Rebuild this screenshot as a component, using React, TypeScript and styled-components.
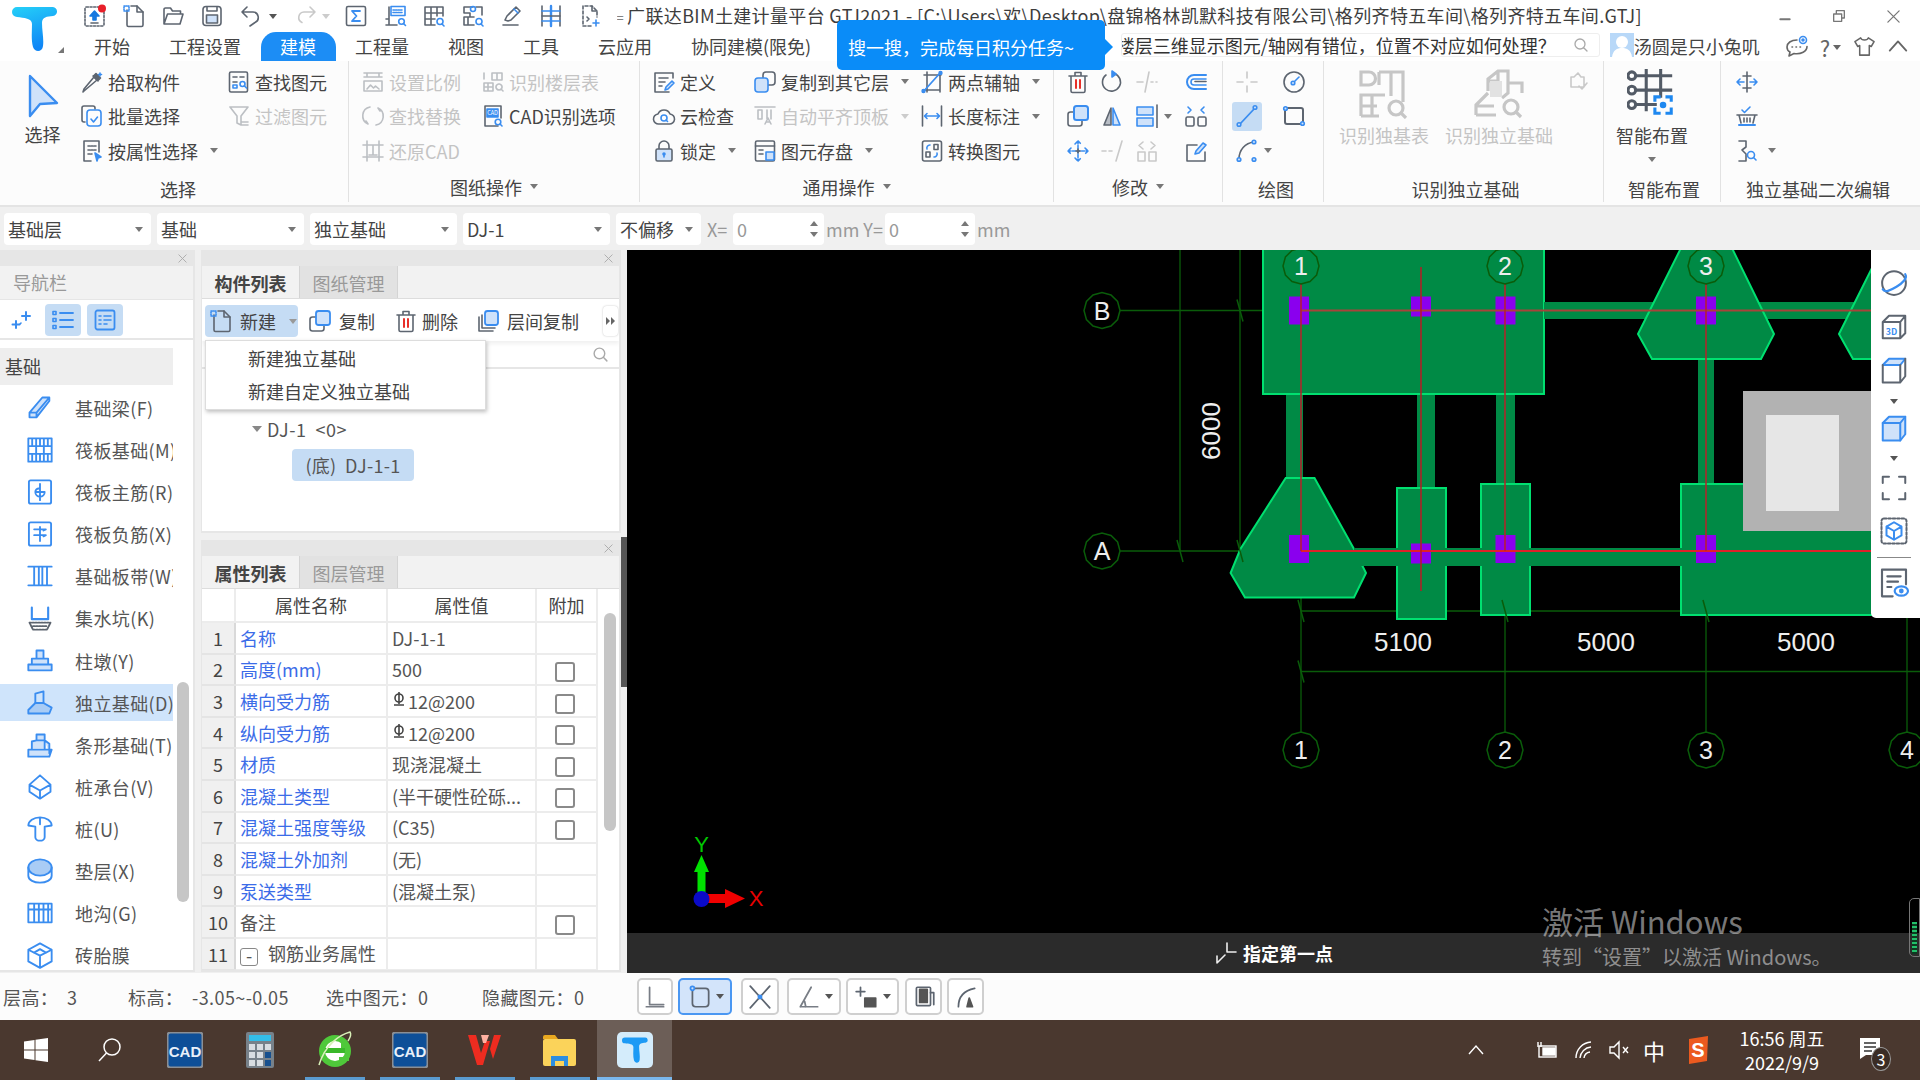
import React from 'react';
import styled, { createGlobalStyle } from 'styled-components';

const G = '#5d6570';
const B = '#3a8df0';
const L = '#cfe2fa';

const GlobalStyle = createGlobalStyle`
  html, body { margin: 0; padding: 0; background: #f0f0f0; }
  body { font-family: "Noto Sans CJK SC", "Noto Sans", sans-serif; font-size: 18px; color: #444; }
  * { box-sizing: border-box; }
`;

const Page = styled.div`
  width: 1920px;
  height: 1080px;
  display: flex;
  flex-direction: column;
  overflow: hidden;
`;

const Svg = styled.svg`
  fill: none;
  stroke: ${G};
  stroke-width: 1.6;
  stroke-linecap: round;
  stroke-linejoin: round;
  flex-shrink: 0;
  display: block;
`;

const icons: Record<string, React.ReactNode> = {
  upload: (<>
    <rect x="2" y="3" width="19" height="19" rx="1.5" strokeDasharray="2 1.6" />
    <path d="M11.5 7l4.5 5h-3v4h-3v-4H7z" fill="#1878e0" stroke="#1878e0" />
    <path d="M8 19h7" stroke={G} />
    <circle cx="19" cy="4.5" r="4" fill="#e8202a" stroke="none" />
  </>),
  newfile: (<>
    <path d="M5 6v15a1.5 1.5 0 0 0 1.5 1.5h13A1.5 1.5 0 0 0 21 21V8l-6-6H9" />
    <path d="M15 2v6h6" />
    <path d="M2 2h5v5H2z" stroke={B} strokeDasharray="1 1" />
  </>),
  folder: (<path d="M3 20V5.5A1.5 1.5 0 0 1 4.5 4h5l2 3h8v3M3 20l3.5-10H22l-3 10z" />),
  save: (<>
    <rect x="3" y="2.5" width="18" height="19" rx="3" />
    <path d="M7 3v4h10V3" />
    <rect x="6.5" y="11" width="11" height="8" fill={L} stroke={G} />
  </>),
  undo: (<path d="M8 3L3 8l5 5M3 8h11a5.5 5.5 0 0 1 2 10.5L11 22" />),
  redo: (<path d="M16 3l5 5-5 5M21 8H10a5.5 5.5 0 0 0-2 10.5" stroke="#c9c9c9" />),
  sigma: (<>
    <rect x="2.5" y="2.5" width="19" height="19" rx="1.5" />
    <path d="M16 7H8l4.5 5L8 17h8" stroke={B} strokeWidth="1.8" />
  </>),
  sheetFind: (<>
    <path d="M6 3v18h8M3 21h4M6 15H3" />
    <rect x="8" y="2.5" width="14" height="9" stroke={B} />
    <path d="M10 6h10M10 8.5h10" stroke={B} strokeDasharray="1.5 1" />
    <circle cx="18.5" cy="17.5" r="2.8" stroke={B} />
    <path d="M20.5 19.5l2 2" stroke={B} />
  </>),
  gridFind: (<>
    <path d="M13 21H3V3h18v9M3 9h18M3 15h10M9 3v18M15 3v9" />
    <circle cx="18" cy="17.5" r="3" stroke={B} />
    <path d="M20 20l2 2" stroke={B} />
  </>),
  gridFind2: (<>
    <path d="M12 3H3v6h6v4H3v8h10M15 3h6v8M9 13h4M7 13v8" />
    <circle cx="12" cy="5" r="2.5" stroke={B} />
    <circle cx="18" cy="17.5" r="3" stroke={B} />
    <path d="M20 20l2 2" stroke={B} />
  </>),
  pen: (<>
    <path d="M3 21h15" />
    <path d="M8 17l-3-1 2-4 9-9 4 4-9 9z" />
    <path d="M14 5l4 4" stroke={B} />
  </>),
  sections: (<>
    <path d="M3 2v20M21 2v20" />
    <path d="M12 2v20" stroke={B} strokeWidth="2.4" />
    <path d="M3 7h18M3 17h18" stroke={B} />
    <path d="M3 12h18" />
  </>),
  pagePlus: (<>
    <path d="M13 22H5V2h9l5 5v6" strokeDasharray="3 2" />
    <path d="M14 2v5h5" />
    <path d="M9 13l2 2-2 2" />
    <path d="M18 16v6M15 19h6" stroke={B} />
  </>),
  pick: (<>
    <path d="M4 21l-1 1 1-3 10-12 3 3z" />
    <path d="M13 6l5 5M16 3.5l4.5 4.5-2.5 2.5L13.5 6z" fill={G} />
    <path d="M20 3v3M18.5 4.5h3" stroke={B} />
  </>),
  batch: (<>
    <path d="M5 18H4a2 2 0 0 1-2-2V4a2 2 0 0 1 2-2h9a2 2 0 0 1 2 2v1" />
    <rect x="7" y="6" width="14" height="16" rx="3" stroke={B} />
    <path d="M11 15l2.5 3 4-5" stroke={B} />
  </>),
  attrSel: (<>
    <path d="M11 22H4V2h15v11" />
    <path d="M8 7h8M8 11h8M8 15h4" strokeDasharray="2 1" />
    <path d="M15 14l6 4-3 1-1 3z" fill={B} stroke={B} />
  </>),
  findEl: (<>
    <rect x="2.5" y="2" width="18" height="20" rx="1.5" />
    <path d="M6 7h4M13 7h4M6 12h4" />
    <rect x="6" y="15" width="4" height="3" stroke={B} />
    <circle cx="15.5" cy="14" r="2.5" stroke={B} />
    <path d="M17.5 16l2 2" stroke={B} />
  </>),
  filter: (<path d="M3 3h18l-7 9v9l-4-2v-7zM15 18h6M15 21h6" />),
  scale: (<path d="M3 3h18M3 7h18M6 3v4M18 3v4M3 11h18v10H3zM6 19l3.5-4 3 3 2-2 3.5 3" />),
  floorTable: (<path d="M3 3v6M3 13h9v8H3zM7 13v8M11 3h10v7H11zM16 3v7M3 17h9M18 14a3 3 0 1 0 .01 0M20 19l2 2" />),
  replace: (<path d="M9 3a9 9 0 0 0-2 17M7 20l-2-3M15 21a9 9 0 0 0 2-17M17 4l2 3" />),
  cadOpt: (<>
    <path d="M17 22H4V2h16v12" />
    <rect x="6" y="5" width="11" height="8" fill={B} stroke={B} />
    <text x="11.5" y="11.2" fontSize="5.5" fill="#fff" stroke="none" textAnchor="middle">CAD</text>
    <circle cx="17" cy="18" r="2.8" stroke={B} />
    <path d="M19 20l2 2" stroke={B} />
  </>),
  restore: (<path d="M2 6h20M2 18h20M6 2v20M18 2v20M8 16h8M12 6v10" />),
  define: (<>
    <path d="M21 8V3H3v19h14" />
    <path d="M7 8h9M7 12h6M7 16h3" />
    <path d="M13 20l1-3 6-6 2 2-6 6z" stroke={B} fill={L} />
  </>),
  cloud: (<>
    <path d="M7 20a5 5 0 0 1-1-10 6.5 6.5 0 0 1 12 0 5 5 0 0 1-1 10z" />
    <circle cx="12" cy="14" r="3" stroke={B} />
    <path d="M14 16l1.5 1.5" stroke={B} />
  </>),
  lock: (<>
    <path d="M7 10V7a5 5 0 0 1 10 0v3" />
    <rect x="4" y="10" width="16" height="12" rx="1.5" fill={L} />
    <circle cx="12" cy="15" r="1" fill={B} stroke={B} />
    <path d="M12 15v3" stroke={B} />
  </>),
  copyTo: (<>
    <rect x="10" y="2" width="12" height="13" rx="3" />
    <rect x="2" y="8" width="13" height="14" rx="3" fill={L} stroke={B} />
  </>),
  layerCopy: (<>
    <path d="M3 8v14h14" />
    <path d="M6 6v13h13" />
    <rect x="9" y="2" width="13" height="14" rx="2.5" fill={L} stroke={B} strokeWidth="1.8" />
  </>),
  compCopy: (<>
    <rect x="2" y="8" width="14" height="14" rx="2.5" />
    <rect x="8" y="2" width="14" height="14" rx="2.5" fill={L} stroke={B} strokeWidth="1.8" />
  </>),
  autoAlign: (<path d="M2 3h20M5 6h4v9H5zM14 6v9M18 6v9M12 20l3-6 3 6M13 18h4" />),
  storeEl: (<>
    <rect x="2.5" y="2" width="19" height="20" rx="1.5" />
    <path d="M2.5 7h19M6 11h4M6 15h4" />
    <rect x="13" y="13" width="8" height="8" fill={L} stroke={B} />
  </>),
  twoPoint: (<>
    <path d="M4 5h17M3 20h17M7 2v20M20 3v19" />
    <path d="M3 22L21 2" stroke={B} strokeWidth="1.8" />
    <circle cx="3.5" cy="21" r="1.4" fill={B} stroke={B} />
    <circle cx="20.5" cy="3" r="1.4" fill={B} stroke={B} />
  </>),
  dim: (<>
    <path d="M2.5 2v20M21.5 2v20" />
    <path d="M5 12h14M7 9.5L4.5 12 7 14.5M17 9.5l2.5 2.5-2.5 2.5" stroke={B} />
  </>),
  convert: (<>
    <rect x="2.5" y="2" width="19" height="20" rx="2" />
    <rect x="6" y="13" width="4" height="5" />
    <rect x="14" y="5.5" width="4" height="5" />
    <path d="M7 10a3 3 0 0 1 3-4M17 14a3 3 0 0 1-3 4" stroke={B} />
  </>),
  trash: (<>
    <path d="M3 6h18M9 5V2.5h6V5M5 6v15a1.5 1.5 0 0 0 1.5 1.5h11A1.5 1.5 0 0 0 19 21V6" />
    <path d="M10 10v8M14 10v8" stroke="#e8302a" strokeWidth="2" />
  </>),
  rotate: (<>
    <path d="M14 3.5A9 9 0 1 1 6 5" />
    <path d="M12 1l4 3-4 3z" fill={B} stroke={B} />
  </>),
  breakLine: (<path d="M2 12h6M14 2l-4 20M16 12h2M21 12h1" stroke="#c9c9c9" />),
  offset: (<>
    <path d="M22 5H10a7 7 0 0 0 0 14h12" stroke={B} strokeWidth="2" />
    <path d="M22 9H10a3 3 0 0 0 0 6h12" stroke={B} />
    <path d="M22 11.5H11" stroke={G} />
  </>),
  copyEl: (<>
    <rect x="2" y="8" width="14" height="14" rx="2.5" />
    <rect x="8" y="2" width="14" height="14" rx="2.5" fill={L} stroke={B} strokeWidth="2" />
  </>),
  mirror: (<>
    <path d="M11 4L4 21h7z" fill="#b9bec6" />
    <path d="M13 4l7 17h-7z" fill={L} stroke={B} />
  </>),
  align: (<>
    <rect x="2" y="3" width="16" height="8" stroke={B} fill={L} />
    <rect x="2" y="14" width="16" height="8" stroke={B} fill={L} />
    <path d="M22 1v23" />
  </>),
  splitBoxes: (<>
    <rect x="2" y="13" width="8" height="9" rx="1.5" />
    <rect x="14" y="13" width="8" height="9" rx="1.5" />
    <path d="M4 3l3 3-3 3M20 3l-3 3 3 3" stroke={B} />
  </>),
  move: (<>
    <path d="M12 2v20M2 12h20M9 5l3-3 3 3M9 19l3 3 3-3M5 9l-3 3 3 3M19 9l3 3-3 3" stroke={B} strokeDasharray="3 1.5" />
    <path d="M10 12h4M12 10v4" />
  </>),
  stretch: (<path d="M2 12h4M9 12h3M22 2l-6 20" stroke="#c9c9c9" />),
  splitOff: (<path d="M3 13h7v9H3zM14 13h7v9h-7zM8 3L4 6.5 8 10M16 3l4 3.5-4 3.5" stroke="#c9c9c9" />),
  editBox: (<>
    <path d="M13 6H3v16h18V13" />
    <path d="M11 15l1-3 7-8 3 2-7 8z" fill={L} stroke={B} />
  </>),
  point: (<path d="M12 2v6M12 16v6M2 12h6M16 12h6" stroke="#c9c9c9" />),
  dial: (<>
    <circle cx="12" cy="12" r="10" />
    <circle cx="11" cy="13" r="1.8" stroke={B} fill={L} />
    <path d="M12.5 11.5L17 7" stroke={B} />
  </>),
  line: (<>
    <path d="M5 20L20 4" stroke={B} strokeWidth="1.8" />
    <circle cx="4" cy="20.5" r="1.8" fill={L} stroke={B} />
    <circle cx="20" cy="3.5" r="1.8" fill={L} stroke={B} />
  </>),
  rect: (<>
    <rect x="3" y="4" width="18" height="16" rx="2" strokeWidth="2" />
    <circle cx="3.5" cy="4.5" r="1.8" fill={L} stroke={B} />
    <circle cx="20.5" cy="19.5" r="1.8" fill={L} stroke={B} />
  </>),
  arc: (<>
    <path d="M4 20c0-9 6-16 15-17" />
    <circle cx="4" cy="20.5" r="1.8" fill={L} stroke={B} />
    <circle cx="19" cy="3" r="1.8" fill={L} stroke={B} />
    <circle cx="19" cy="20.5" r="1.8" fill={L} stroke={B} />
  </>),
  check: (<path d="M5 20h13V10h-3L12 6 8 10H5zM13 19l3 3 5-6" stroke="#c9c9c9" />),
  rotate3: (<>
    <path d="M12 2v20M8 6h8M8 18h8" />
    <path d="M2 12h7M15 12h7M5 9l-3 3 3 3M19 9l3 3-3 3" stroke={B} />
  </>),
  basket: (<>
    <path d="M7 6l2.5 2.5L15 3" stroke={B} />
    <path d="M2 11h20M4 11l2 8M20 11l-2 8M9 14v4M12 14v4M15 14v4" />
    <path d="M4 21h16" stroke={B} strokeWidth="2" />
  </>),
  fold: (<>
    <path d="M4 2h7v6l-4 3 4 4v7H4" />
    <circle cx="16" cy="16" r="3.5" stroke={B} />
    <path d="M18.5 18.5l2.5 2.5" stroke={B} />
  </>),
  sparkle: (<>
    <path d="M17 4v8M13 8h8M7 13v7M3.5 16.5h7" stroke={B} strokeWidth="2" />
    <path d="M12 15l-1 1" stroke={B} />
  </>),
  listView: (<>
    <path d="M9 5h13M9 12h13M9 19h13" stroke={B} strokeWidth="1.8" />
    <rect x="2" y="3.5" width="3" height="3" stroke={B} />
    <rect x="2" y="10.5" width="3" height="3" stroke={B} />
    <rect x="2" y="17.5" width="3" height="3" stroke={B} />
  </>),
  detailView: (<>
    <rect x="2.5" y="2.5" width="19" height="19" rx="2" stroke={B} strokeWidth="1.8" />
    <path d="M6 8h2M11 8h7M6 12h2M11 12h7M6 16h2M11 16h3" stroke={B} />
  </>),
  beam: (<path d="M3 16L14 3h6v3L9 20H3zM3 16h6v4M9 16L20 3" stroke={B} fill={L} />),
  raft: (<path d="M2 2h20v20H2zM2 8.7h20M2 15.3h20M8.7 2v20M15.3 2v20M5.3 2v6.7M12 2v6.7M18.7 2v6.7M5.3 15.3V22M12 15.3V22M18.7 15.3V22" stroke={B} />),
  raftMain: (<>
    <rect x="2.5" y="2" width="19" height="20" rx="1.5" stroke={B} />
    <path d="M12 5v14M8 12a3 3 0 0 1 3-3M16 12a4 4 0 0 1-8 0h8" stroke={B} />
  </>),
  raftNeg: (<>
    <rect x="2.5" y="2" width="19" height="20" rx="1.5" stroke={B} />
    <path d="M7 8h10l-2 1M7 13h10l-2 1M12 6v12" stroke={B} />
  </>),
  strip: (<path d="M2 4h20M2 20h20M7 4v16M11 4v16M14 4v16M18 4v16" stroke={B} fill={L} />),
  sump: (<>
    <path d="M5 3v10h14V3" stroke={B} strokeWidth="1.8" />
    <path d="M3 16h18l-3 6H6zM6 19h12" stroke={G} strokeDasharray="1.5 1" />
  </>),
  pier: (<path d="M9 10V3h6v7M5 15v-5h14v5M2 15h20v5H2z" stroke={B} fill={L} />),
  footing: (<>
    <path d="M8 12V4l7-2v10" stroke={B} />
    <path d="M2 21v-3l6-6h7l7 4-2 5H2z" stroke={B} fill="#a9ccf5" />
  </>),
  stripF: (<path d="M9 8V3h7v5M5 15V9l4-1h7v7M2 16h20l-2 6H2zM16 8l4 3v8" stroke={B} fill={L} />),
  pileCap: (<path d="M12 2L3 10v6l9 6 9-6v-6zM3 10l9 5 9-5M12 15v7" stroke={B} />),
  pile: (<path d="M2 9a10 7 0 0 1 20 0l-6 1v9a4 3 0 0 1-8 0v-9zM12 2v6" stroke={B} />),
  pad: (<>
    <ellipse cx="12" cy="9" rx="10" ry="7" stroke={B} fill="#a9ccf5" />
    <path d="M2 9v7c0 4 5 6 10 6s10-2 10-6V9" stroke={B} />
  </>),
  trench: (<path d="M2 4h20v16H2zM2 9h20M7 4v16M11 4v16M15 4v16M19 4v16" stroke={B} />),
  brick: (<path d="M12 2l10 5.500v10L12 23 2 17.500v-10zM2 7.500l10 5 10-5M12 12.500V23M7 10l5-3 5 3" stroke={B} />),
  orbit: (<>
    <circle cx="12" cy="12" r="9.5" />
    <path d="M3 17c1.5 3 6 1 11-2s9-7 7-10" stroke={B} strokeWidth="1.8" />
  </>),
  cube3d: (<>
    <path d="M3 8l5-5h13v14l-4 4H3zM3 8h14v13M17 8l4-5" />
    <text x="10" y="18" fontSize="7" fontWeight="700" fill={B} stroke="none" textAnchor="middle">3D</text>
  </>),
  cubeTop: (<>
    <path d="M3 8l5-5h13l-4 5z" fill={L} stroke={B} />
    <path d="M3 8v14h14V8M17 22l4-5V3" />
  </>),
  cubeSel: (<>
    <path d="M3 8l5-5h13v14l-4 5H3z" fill={L} stroke={B} />
    <path d="M3 8h14v14M17 8l4-5" stroke={B} />
  </>),
  corners: (<path d="M3 8V3h5M16 3h5v5M3 16v5h5M16 21h5v-5" />),
  cubeBox: (<>
    <rect x="2" y="2" width="20" height="20" rx="2" strokeDasharray="2 1.5" />
    <path d="M12 5l6 3.5v7L12 19l-6-3.5v-7zM6 8.5l6 3.5 6-3.5M12 12v7" stroke={B} />
  </>),
  props: (<>
    <path d="M11 22H3V2h18v11" />
    <path d="M7 7h10M7 11h8M7 15h3" />
    <ellipse cx="17.5" cy="18" rx="5" ry="3.5" stroke={B} />
    <circle cx="17.5" cy="18" r="1" fill={B} stroke={B} />
  </>),
  stOrtho: (<path d="M7 3v16h13M4 21h16" stroke="#787d85" />),
  stBox: (<>
    <rect x="5" y="4" width="15" height="17" rx="3" />
    <circle cx="5" cy="4" r="1.8" stroke={B} fill={L} />
  </>),
  stCross: (<>
    <path d="M3 2l18 20M21 2L3 22" />
    <circle cx="12" cy="12" r="1.5" fill={B} stroke={B} />
  </>),
  stAngle: (<path d="M4 21L14 3M4 21h16M9 21l-1-5" stroke="#787d85" />),
  stPlus: (<>
    <path d="M6 3v8M2 7h8" />
    <rect x="10" y="13" width="10" height="8" fill="#555" stroke="#555" />
  </>),
  stDoc: (<>
    <rect x="5" y="3" width="13" height="17" rx="1" />
    <rect x="8" y="5" width="7" height="12" fill="#555" stroke="#555" />
    <path d="M18 8h3v11" />
  </>),
  stArc: (<>
    <path d="M5 21c0-9 5-15 15-17" />
    <path d="M15 13l3 8h-5z" fill="#555" stroke="#555" />
  </>),
  cmdIcon: (<path d="M3 22L11 14M3 15v7M13 2v9h9" stroke="#eee" />),
  search: (<><circle cx="10.5" cy="10.5" r="7.5" stroke="#aaa" strokeWidth="2" /><path d="M16 16l5 5" stroke="#aaa" strokeWidth="2" /></>),
  close: (<path d="M3 3l18 18M21 3L3 21" stroke="#777" strokeWidth="2" />),
  panelClose: (<path d="M4 4l16 16M20 4L4 20" stroke="#aaa" strokeWidth="2" />),
  minimize: (<path d="M5 17h14" stroke="#777" strokeWidth="3" />),
  restoreWin: (<path d="M4 9h12v11H4zM8 9V4h12v11h-4" stroke="#777" strokeWidth="2" />),
  chat: (<>
    <path d="M12 5C6 5 2 8 2 12c0 2 1 4 3 5l-1 4 5-2.5c7 1 13-2 13-7" stroke="#666" />
    <path d="M7 12h.5M11 12h.5M15 12h.5" stroke="#666" />
    <circle cx="18" cy="5" r="3.5" stroke={B} />
    <circle cx="18" cy="5" r="1" fill={B} stroke={B} />
  </>),
  shirt: (<path d="M8 3L2 7l3 5 2-1v10h10V11l2 1 3-5-6-4c-1 3-7 3-8 0z" stroke="#666" />),
  chevron: (<path d="M3 17L12 7l9 10" stroke="#666" strokeWidth="2" />),
};

const Icon = ({ name, size = 24 }: { name: string; size?: number }) => (
  <Svg width={size} height={size} viewBox="0 0 24 24">
    {icons[name]}
  </Svg>
);

const Caret = styled.span<{ $ml?: number; $color?: string }>`
  display: inline-block;
  width: 0;
  height: 0;
  margin-left: ${(p) => p.$ml ?? 8}px;
  border-left: 4px solid transparent;
  border-right: 4px solid transparent;
  border-top: 5px solid ${(p) => p.$color ?? '#777'};
  flex-shrink: 0;
`;

/* ---------- header ---------- */

const Header = styled.header`
  position: relative;
  height: 61px;
  display: flex;
  background: #fff;
  flex-shrink: 0;
`;

const LogoCol = styled.div`
  width: 74.5px;
  padding: 6px 0 0 12px;
  position: relative;
`;

const LogoCorner = styled.span`
  position: absolute;
  left: 58px;
  top: 47px;
  width: 0;
  height: 0;
  border-left: 6px solid transparent;
  border-bottom: 6px solid #777;
`;

const HeaderMain = styled.div`
  flex: 1;
  min-width: 0;
  display: flex;
  flex-direction: column;
`;

const TitleRow = styled.div`
  height: 32px;
  display: flex;
  align-items: center;
  padding-left: 8px;
`;

const QuickItem = styled.div<{ $w?: number }>`
  width: ${(p) => p.$w ?? 39}px;
  display: flex;
  align-items: center;
  flex-shrink: 0;
`;

const TitleText = styled.div`
  flex: 1;
  white-space: nowrap;
  overflow: hidden;
  line-height: 30px;
  letter-spacing: 0.35px;
  color: #3d3d3d;
`;

const TitleMark = styled.span`
  font-size: 13px;
  margin-right: 3px;
  color: #666;
`;

const WinButton = styled.div`
  width: 54px;
  display: flex;
  justify-content: center;
  flex-shrink: 0;
`;

const TabRow = styled.div`
  height: 29px;
  display: flex;
  align-items: flex-start;
`;

const Tab = styled.div<{ $active?: boolean }>`
  height: 29px;
  line-height: 29px;
  padding: 0 19.5px;
  white-space: nowrap;
  color: ${(p) => (p.$active ? '#fff' : '#444')};
  background: ${(p) => (p.$active ? '#1c8df5' : 'transparent')};
  border-radius: ${(p) => (p.$active ? '15px 15px 0 0' : '0')};
`;

const Tip = styled.div`
  position: absolute;
  left: 837px;
  top: 20px;
  width: 268px;
  height: 50px;
  padding-left: 11px;
  line-height: 54px;
  color: #fff;
  background: #0a8cf8;
  border-radius: 5px;
  white-space: nowrap;
  z-index: 5;
  &::after {
    content: '';
    position: absolute;
    right: -8px;
    top: 19px;
    border-top: 8px solid transparent;
    border-bottom: 8px solid transparent;
    border-left: 8px solid #0a8cf8;
  }
`;

const SearchBox = styled.div`
  width: 479px;
  height: 24px;
  margin: 1px 0 0 290px;
  display: flex;
  align-items: center;
  justify-content: space-between;
  padding-right: 10px;
  background: #fff;
  border: 1px solid #eee;
  border-radius: 3px;
  line-height: 22px;
  color: #333;
  overflow: hidden;
  white-space: nowrap;
`;

const SearchText = styled.span`
  margin-left: -5px;
`;

const Avatar = styled.div`
  width: 24px;
  height: 24px;
  margin: 1px 0 0 10px;
  background: #b8d8f8;
  overflow: hidden;
  flex-shrink: 0;
`;

const UserName = styled.div`
  line-height: 28px;
  white-space: nowrap;
  color: #444;
`;

const HeadIcon = styled.div<{ $ml: number }>`
  margin: 3px 0 0 ${(p) => p.$ml}px;
  display: flex;
  align-items: center;
  line-height: 24px;
`;

const Question = styled.span`
  font-size: 22px;
  color: #666;
`;

/* ---------- ribbon ---------- */

const Ribbon = styled.div`
  height: 144px;
  display: flex;
  background: #fcfcfc;
  flex-shrink: 0;
`;

const Group = styled.section<{ $w: number; $end?: boolean }>`
  width: ${(p) => p.$w}px;
  display: flex;
  flex-direction: column;
  flex-shrink: 0;
  border-right: ${(p) => (p.$end ? 'none' : '1px solid #e2e2e2')};
  margin-bottom: 3px;
`;

const GroupBody = styled.div<{ $pad: number }>`
  height: 114px;
  padding: 3.5px 0 0 ${(p) => p.$pad}px;
  display: flex;
`;

const GroupLabel = styled.div<{ $up?: boolean; $pl?: number }>`
  height: 27px;
  line-height: 24px;
  padding-left: ${(p) => p.$pl ?? 0}px;
  margin-top: ${(p) => (p.$up ? -2 : 0)}px;
  display: flex;
  align-items: center;
  justify-content: center;
  color: #444;
`;

const Col = styled.div<{ $w?: number; $ml?: number }>`
  ${(p) => (p.$w ? `width: ${p.$w}px;` : '')}
  margin-left: ${(p) => p.$ml ?? 0}px;
  display: flex;
  flex-direction: column;
  flex-shrink: 0;
`;

const Item = styled.div<{ $off?: boolean }>`
  height: 34.5px;
  display: flex;
  align-items: center;
  gap: 4px;
  white-space: nowrap;
  color: ${(p) => (p.$off ? '#c4c4c4' : '#444')};
  & > svg {
    opacity: ${(p) => (p.$off ? 0.4 : 1)};
  }
`;

const IconGrid = styled.div<{ $cols: string }>`
  display: grid;
  grid-template-columns: ${(p) => p.$cols};
  grid-auto-rows: 34.5px;
  align-items: center;
  justify-items: start;
`;

const IconCell = styled.div<{ $active?: boolean; $pl?: number }>`
  display: flex;
  align-items: center;
  justify-content: ${(p) => (p.$active ? 'center' : 'flex-start')};
  width: ${(p) => (p.$active ? '30px' : 'auto')};
  height: 29px;
  padding-left: ${(p) => p.$pl ?? 0}px;
  background: ${(p) => (p.$active ? '#c5dcf4' : 'transparent')};
  border-radius: 3px;
`;

const BigItem = styled.div<{ $w: number; $off?: boolean; $ml?: number }>`
  width: ${(p) => p.$w}px;
  margin-left: ${(p) => p.$ml ?? 0}px;
  display: flex;
  flex-direction: column;
  align-items: center;
  padding-top: 4.5px;
  flex-shrink: 0;
  white-space: nowrap;
  color: ${(p) => (p.$off ? '#c4c4c4' : '#444')};
`;

const BigLabel = styled.div`
  margin-top: 4px;
  line-height: 24px;
`;

const BigCaret = styled.div`
  margin-top: 10px;
  display: flex;
`;

const PointerIcon = styled.svg`
  margin-top: 5px;
`;

const SmallAside = styled.div`
  margin: 2px 0 0 13px;
`;

const RItem = ({ icon, label, caret, off }: { icon: string; label: string; caret?: boolean; off?: boolean }) => (
  <Item $off={off}>
    <Icon name={icon} />
    <span>{label}</span>
    {caret && <Caret $color={off ? '#ccc' : '#777'} />}
  </Item>
);

/* ---------- tool options row ---------- */

const OptionRow = styled.div`
  height: 45px;
  display: flex;
  align-items: center;
  padding: 1px 0 0 4px;
  gap: 6px;
  background: #f0f0f0;
  border-top: 2px solid #e4e4e4;
  flex-shrink: 0;
`;

const Combo = styled.div<{ $w: number }>`
  width: ${(p) => p.$w}px;
  height: 32px;
  padding: 0 8px 0 4px;
  display: flex;
  align-items: center;
  justify-content: space-between;
  background: #fff;
  border-radius: 4px;
  color: #444;
  line-height: 30px;
  flex-shrink: 0;
`;

const OptLabel = styled.span<{ $w: number; $ml?: number }>`
  width: ${(p) => p.$w}px;
  margin-left: ${(p) => p.$ml ?? 0}px;
  color: #999;
  white-space: nowrap;
  flex-shrink: 0;
  margin-right: -6px;
`;

const NumInput = styled.div<{ $w: number }>`
  width: ${(p) => p.$w}px;
  height: 32px;
  padding: 0 6px 0 4px;
  display: flex;
  align-items: center;
  justify-content: space-between;
  background: #fff;
  border-radius: 4px;
  color: #999;
  flex-shrink: 0;
`;

const Spin = styled.div`
  display: flex;
  flex-direction: column;
  gap: 6px;
  & > span:first-child {
    transform: rotate(180deg);
  }
`;

/* ---------- workspace ---------- */

const Workspace = styled.main`
  flex: 1;
  min-height: 0;
  display: flex;
  background: #f0f0f0;
`;

const NavPanel = styled.aside`
  position: relative;
  width: 195px;
  margin-right: 6px;
  background: #fff;
  border-right: 2px solid #e6e6e6;
  border-bottom: 2px solid #e6e6e6;
  display: flex;
  flex-direction: column;
  overflow: hidden;
  height: 722px;
  flex-shrink: 0;
`;

const Strip = styled.div`
  height: 16px;
  background: #e6e6e6;
  display: flex;
  justify-content: flex-end;
  align-items: center;
  padding-right: 5px;
  flex-shrink: 0;
`;

const NavTitle = styled.div`
  height: 33px;
  line-height: 33px;
  padding-left: 13px;
  color: #999;
  background: #f2f2f2;
  flex-shrink: 0;
`;

const NavIcons = styled.div`
  height: 41px;
  display: flex;
  align-items: center;
  padding: 2px 0 0 9px;
  border-top: 1px solid #e6e6e6;
  border-bottom: 2px solid #e6e6e6;
  flex-shrink: 0;
`;

const NavToggle = styled.div<{ $active?: boolean; $ml: number }>`
  width: 36px;
  height: 32px;
  margin-left: ${(p) => p.$ml}px;
  display: flex;
  align-items: center;
  justify-content: center;
  background: ${(p) => (p.$active ? '#c5dcf4' : 'transparent')};
  border-radius: 4px;
`;

const NavSection = styled.div`
  width: 173px;
  height: 37px;
  margin-top: 8px;
  padding-left: 5px;
  line-height: 37px;
  background: #eeeeee;
  color: #444;
  flex-shrink: 0;
`;

const NavList = styled.div`
  width: 173px;
  margin-top: 4.5px;
  display: flex;
  flex-direction: column;
  gap: 5.1px;
`;

const NavItem = styled.div<{ $active?: boolean }>`
  height: 37px;
  flex-shrink: 0;
  display: flex;
  align-items: center;
  padding-left: 26px;
  gap: 21px;
  white-space: nowrap;
  overflow: hidden;
  letter-spacing: 0.4px;
  color: #555;
  background: ${(p) => (p.$active ? '#cfe4fb' : 'transparent')};
`;

const Scrollbar = styled.div<{ $l: number; $t: number; $w: number; $h: number }>`
  position: absolute;
  left: ${(p) => p.$l}px;
  top: ${(p) => p.$t}px;
  width: ${(p) => p.$w}px;
  height: ${(p) => p.$h}px;
  background: #c6c6c6;
  border-radius: 6px;
`;

const MidColumn = styled.div`
  width: 420px;
  display: flex;
  flex-direction: column;
  flex-shrink: 0;
  gap: 7px;
  height: 722px;
`;

const Panel = styled.section<{ $h: number }>`
  position: relative;
  height: ${(p) => p.$h}px;
  background: #fff;
  border-right: 2px solid #e6e6e6;
  border-bottom: 2px solid #e6e6e6;
  border-left: 1px solid #e6e6e6;
  display: flex;
  flex-direction: column;
  overflow: hidden;
  flex-shrink: 0;
`;

const TabStrip = styled.div`
  height: 33px;
  display: flex;
  background: #f2f2f2;
  border-bottom: 1px solid #ddd;
  flex-shrink: 0;
`;

const PanelTab = styled.div<{ $active?: boolean }>`
  width: 98px;
  text-align: center;
  line-height: 34px;
  font-weight: ${(p) => (p.$active ? 700 : 400)};
  color: ${(p) => (p.$active ? '#444' : '#999')};
  background: ${(p) => (p.$active ? '#f2f2f2' : '#e2e2e2')};
  border-right: 1px solid #d4d4d4;
`;

const CompTools = styled.div`
  height: 42px;
  display: flex;
  align-items: center;
  padding: 2px 0 0 3px;
  box-shadow: 0 3px 4px rgba(0, 0, 0, 0.06);
  flex-shrink: 0;
`;

const NewButton = styled.div`
  width: 93px;
  height: 32px;
  padding-left: 4px;
  display: flex;
  align-items: center;
  gap: 7px;
  background: #c5dcf4;
  border-radius: 4px;
  flex-shrink: 0;
`;

const CompTool = styled.div<{ $ml: number; $gap?: number }>`
  margin-left: ${(p) => p.$ml}px;
  display: flex;
  align-items: center;
  gap: ${(p) => p.$gap ?? 7}px;
  white-space: nowrap;
  color: #444;
`;

const MoreButton = styled.div`
  width: 15px;
  height: 30px;
  margin-left: 24px;
  display: flex;
  align-items: center;
  justify-content: center;
  border-radius: 4px;
  background: #fff;
  box-shadow: 0 0 2px rgba(0, 0, 0, 0.25);
`;

const SearchRow = styled.div`
  height: 28px;
  padding-right: 10px;
  display: flex;
  justify-content: flex-end;
  align-items: center;
  border-bottom: 2px solid #e6e6e6;
  flex-shrink: 0;
`;

const TreeNode = styled.div`
  margin: 48px 0 0 50px;
  height: 24px;
  display: flex;
  align-items: center;
  gap: 5px;
  line-height: 24px;
  white-space: pre;
  letter-spacing: 0.5px;
  color: #555;
`;

const TreeCaret = styled.span`
  width: 0;
  height: 0;
  border-left: 5px solid transparent;
  border-right: 5px solid transparent;
  border-top: 6px solid #888;
`;

const LeafChip = styled.div`
  width: 122px;
  height: 32px;
  margin: 8px 0 0 90px;
  line-height: 32px;
  text-align: center;
  background: #c5dcf4;
  border-radius: 4px;
  color: #555;
  white-space: pre;
  letter-spacing: 0.3px;
`;

const Menu = styled.div`
  position: absolute;
  left: 3px;
  top: 90px;
  width: 281px;
  height: 70px;
  padding: 1px 0 0 42px;
  background: #fff;
  border: 1px solid #ddd;
  box-shadow: 1px 2px 4px rgba(0, 0, 0, 0.25);
  z-index: 3;
`;

const MenuItem = styled.div`
  height: 33px;
  line-height: 33px;
  color: #444;
`;

const Table = styled.table`
  width: 395px;
  table-layout: fixed;
  border-collapse: collapse;
`;

const HeadCell = styled.th`
  height: 33px;
  font-weight: 400;
  color: #444;
  border-right: 2px solid #ececec;
  border-bottom: 2px solid #ececec;
  padding: 0;
  font-size: 18px;
`;

const Row = styled.tr`
  height: 31.6px;
`;

const IndexCell = styled.td`
  background: #f0f0f0;
  text-align: center;
  padding: 0;
  border-right: 2px solid #d9d9d9;
  border-bottom: 2px solid #e4e4e4;
  color: #444;
  line-height: 24px;
`;

const Cell = styled.td<{ $link?: boolean; $center?: boolean }>`
  padding: 0 0 0 4px;
  white-space: nowrap;
  overflow: hidden;
  line-height: 24px;
  color: ${(p) => (p.$link ? '#3b6ce8' : '#555')};
  text-align: ${(p) => (p.$center ? 'center' : 'left')};
  border-right: 2px solid #ececec;
  border-bottom: 2px solid #ececec;
`;

const Check = styled.span`
  display: inline-block;
  width: 20px;
  height: 20px;
  border: 2px solid #8a8a8a;
  border-radius: 3px;
  vertical-align: middle;
  margin-right: 8px;
`;

const Expander = styled.span`
  display: inline-block;
  width: 18px;
  height: 18px;
  margin-right: 10px;
  border: 1px solid #888;
  border-radius: 3px;
  line-height: 13px;
  text-align: center;
  vertical-align: -2px;
`;

const Rebar = styled.svg`
  vertical-align: 3px;
  margin-right: 2px;
  fill: none;
  stroke: #444;
  stroke-width: 1.6;
`;

const Splitter = styled.div`
  width: 6px;
  flex-shrink: 0;
  padding-top: 287px;
`;

const SplitBar = styled.div`
  height: 150px;
  background: #555;
`;

const Canvas = styled.div`
  position: relative;
  flex: 1;
  min-width: 0;
  height: 723px;
  display: flex;
  flex-direction: column;
  background: #000;
  overflow: hidden;
`;

const DrawingSvg = styled.svg`
  display: block;
  flex-shrink: 0;
`;

const CommandBar = styled.div`
  height: 40px;
  flex-shrink: 0;
  display: flex;
  align-items: center;
  justify-content: center;
  gap: 5px;
  background: #2b2b2b;
  color: #fff;
  font-weight: 700;
`;

const Dock = styled.div`
  position: absolute;
  right: 0;
  top: 0;
  width: 49px;
  height: 368px;
  padding: 11px 3px 0 0;
  background: #fff;
  border-radius: 0 0 0 5px;
  display: flex;
  flex-direction: column;
  align-items: center;
`;

const DockSlot = styled.div<{ $h: number }>`
  height: ${(p) => p.$h}px;
  display: flex;
  align-items: center;
  justify-content: center;
`;

const DockRule = styled.div`
  width: 34px;
  height: 1px;
  background: #888;
  flex-shrink: 0;
`;

const Watermark = styled.div`
  position: absolute;
  left: 915px;
  top: 652px;
  color: rgba(255, 255, 255, 0.48);
  white-space: nowrap;
  pointer-events: none;
`;

const WatermarkHead = styled.div`
  font-size: 31px;
  line-height: 38px;
`;

const WatermarkSub = styled.div`
  font-size: 20px;
  line-height: 28px;
  margin-top: 3px;
`;

const ScrollTab = styled.div`
  position: absolute;
  right: 0;
  top: 648px;
  width: 11px;
  height: 59px;
  border: 1px solid #777;
  border-radius: 5px 0 0 5px;
  display: flex;
  align-items: flex-end;
  justify-content: center;
  padding-bottom: 2px;
`;

const ScrollFill = styled.div`
  width: 5px;
  height: 32px;
  background: repeating-linear-gradient(#22c06a 0 2px, #0d3a20 2px 4px);
`;

/* ---------- status bar ---------- */

const StatusBar = styled.div`
  height: 47px;
  display: flex;
  align-items: center;
  padding-left: 3px;
  background: #fcfcfc;
  flex-shrink: 0;
`;

const StatText = styled.div<{ $w: number }>`
  width: ${(p) => p.$w}px;
  white-space: pre;
  letter-spacing: 0.4px;
  color: #555;
  flex-shrink: 0;
`;

const StatButton = styled.div<{ $w: number; $active?: boolean; $ml: number }>`
  width: ${(p) => p.$w}px;
  height: 37px;
  margin-left: ${(p) => p.$ml}px;
  display: flex;
  align-items: center;
  justify-content: center;
  gap: 3px;
  background: ${(p) => (p.$active ? '#d3e4fa' : '#fff')};
  border: 2px solid ${(p) => (p.$active ? '#4a97f2' : '#cfcfcf')};
  border-radius: 5px;
  flex-shrink: 0;
`;

/* ---------- taskbar ---------- */

const Taskbar = styled.footer`
  height: 60px;
  display: flex;
  align-items: center;
  background: #4a382f;
  color: #fff;
  flex-shrink: 0;
`;

const TaskSlot = styled.div<{ $w?: number; $running?: boolean; $active?: boolean }>`
  position: relative;
  width: ${(p) => p.$w ?? 75}px;
  height: 60px;
  display: flex;
  align-items: center;
  justify-content: center;
  flex-shrink: 0;
  background: ${(p) => (p.$active ? '#6c5e57' : 'transparent')};
  &::after {
    content: '';
    display: ${(p) => (p.$running || p.$active ? 'block' : 'none')};
    position: absolute;
    bottom: 0;
    left: ${(p) => (p.$active ? 0 : 8)}px;
    right: ${(p) => (p.$active ? 0 : 7)}px;
    height: 3px;
    background: ${(p) => (p.$active ? '#7ab8ee' : '#5a9bd0')};
  }
`;

const Tray = styled.div`
  margin-left: auto;
  padding-right: 20px;
  display: flex;
  align-items: center;
  height: 60px;
`;

const TraySlot = styled.div<{ $w: number; $ml?: number }>`
  width: ${(p) => p.$w}px;
  margin-left: ${(p) => p.$ml ?? 0}px;
  display: flex;
  justify-content: center;
  align-items: center;
  flex-shrink: 0;
`;

const ImeGlyph = styled.span`
  font-size: 22px;
  color: #fff;
`;

const Clock = styled.div`
  width: 116px;
  margin-left: 2px;
  text-align: center;
  line-height: 24px;
  color: #fff;
  white-space: nowrap;
`;

const ActionCenter = styled.div`
  position: relative;
  width: 60px;
  height: 24px;
  display: flex;
  justify-content: center;
`;

const Badge = styled.span`
  position: absolute;
  left: 31px;
  top: 9px;
  width: 20px;
  height: 24px;
  border: 1px solid #999;
  border-radius: 50%;
  background: #3a2c25;
  font-size: 16px;
  line-height: 22px;
  text-align: center;
  color: #fff;
`;

const navItems: [string, string][] = [
  ['beam', '基础梁(F)'],
  ['raft', '筏板基础(M)'],
  ['raftMain', '筏板主筋(R)'],
  ['raftNeg', '筏板负筋(X)'],
  ['strip', '基础板带(W)'],
  ['sump', '集水坑(K)'],
  ['pier', '柱墩(Y)'],
  ['footing', '独立基础(D)'],
  ['stripF', '条形基础(T)'],
  ['pileCap', '桩承台(V)'],
  ['pile', '桩(U)'],
  ['pad', '垫层(X)'],
  ['trench', '地沟(G)'],
  ['brick', '砖胎膜'],
];

const propRows: { name: string; value?: string; rebar?: boolean; link?: boolean; check?: boolean }[] = [
  { name: '名称', value: 'DJ-1-1', link: true },
  { name: '高度(mm)', value: '500', link: true, check: true },
  { name: '横向受力筋', value: '12@200', rebar: true, link: true, check: true },
  { name: '纵向受力筋', value: '12@200', rebar: true, link: true, check: true },
  { name: '材质', value: '现浇混凝土', link: true, check: true },
  { name: '混凝土类型', value: '(半干硬性砼砾...', link: true, check: true },
  { name: '混凝土强度等级', value: '(C35)', link: true, check: true },
  { name: '混凝土外加剂', value: '(无)', link: true },
  { name: '泵送类型', value: '(混凝土泵)', link: true },
  { name: '备注', check: true },
];

const Bubble = ({ x, y, label }: { x: number; y: number; label: string }) => {
  const pts = Array.from({ length: 12 }, (_, i) => {
    const a = (i * Math.PI) / 6;
    return `${x + 18 * Math.sin(a)},${y + 18 * Math.cos(a)}`;
  }).join(' ');
  return (
    <>
      <polygon points={pts} fill="none" stroke="#0a5c0a" strokeWidth="1.5" />
      <text x={x} y={y + 9} fontSize="25" fill="#eee" textAnchor="middle" fontFamily="Liberation Sans, sans-serif">
        {label}
      </text>
    </>
  );
};

const Tick = ({ x, y }: { x: number; y: number }) => <path d={`M${x - 3} ${y - 11}L${x + 3} ${y + 11}`} stroke="#0a5c0a" strokeWidth="1.5" />;

const Purple = ({ x, y, w = 20, h = 28 }: { x: number; y: number; w?: number; h?: number }) => (
  <rect x={x} y={y} width={w} height={h} fill="#8a00ee" />
);

const Drawing = () => {
  const green = '#008a45';
  const edge = '#00e070';
  const dim = '#0a5c0a';
  const font = 'Liberation Sans, sans-serif';
  return (
    <DrawingSvg width="1293" height="683" viewBox="627 250 1293 683">
      {/* dim lines */}
      <path d="M1180 250V551M1240 250V551M1120 310.5H1301M1120 551H1301M1301 611H1706M1301 671.5H1920M1301 551V732M1505 551V732M1706 551V732M1907 615V732" stroke={dim} strokeWidth="1.3" fill="none" />
      {/* stems */}
      <rect x="1286" y="394" width="17" height="90" fill={green} />
      <rect x="1417" y="394" width="18" height="96" fill={green} />
      <rect x="1496" y="394" width="19" height="92" fill={green} />
      <rect x="1698" y="359" width="16" height="127" fill={green} />
      {/* slabs */}
      <rect x="1263" y="240" width="281" height="154" fill={green} stroke={edge} strokeWidth="2" />
      <rect x="1544" y="302" width="376" height="17" fill={green} />
      <polygon points="1685,240 1728,240 1774,334 1761,359 1652,359 1638,334" fill={green} stroke={edge} strokeWidth="2" />
      <polygon points="1886,240 1929,240 1975,334 1962,359 1853,359 1839,334" fill={green} stroke={edge} strokeWidth="2" />
      <rect x="1397" y="488" width="49" height="131" fill={green} stroke={edge} strokeWidth="2" />
      <rect x="1481" y="484" width="49" height="131" fill={green} stroke={edge} strokeWidth="2" />
      <rect x="1681" y="484" width="260" height="131" fill={green} stroke={edge} strokeWidth="2" />
      <polygon points="1304.6,478 1314.5,478 1354,549 1366,573 1354,597.5 1245,597.5 1230.6,573 1240.4,549 1285.7,478" fill={green} stroke={edge} strokeWidth="2" />
      <rect x="1354" y="548" width="566" height="18" fill={green} />
      <rect x="1743" y="391" width="190" height="140" fill="#b2b2b2" />
      <rect x="1766" y="415" width="73" height="96" fill="#e6e6e6" />
      {/* columns */}
      <Purple x={1289} y={296.5} />
      <Purple x={1411} y={296.5} h={20} />
      <Purple x={1495.5} y={296.5} />
      <Purple x={1696} y={296.5} />
      <Purple x={1289} y={535} />
      <Purple x={1411} y={543.5} h={20} />
      <Purple x={1495.5} y={535} />
      <Purple x={1696} y={535} />
      {/* red axis */}
      <path d="M1301 310.5H1920" stroke="#a8433a" strokeWidth="2" />
      <path d="M1301 551H1920" stroke="#e0202a" strokeWidth="2" />
      <path d="M1301 284V551M1505 284V551M1706 284V551" stroke="#b8202a" strokeWidth="1.5" />
      <path d="M1421 267V591" stroke="#b81a24" strokeWidth="1.5" />
      <Tick x={1240} y={310.5} />
      <Tick x={1180} y={551} />
      <Tick x={1240} y={551} />
      <Tick x={1301} y={611} />
      <Tick x={1505} y={611} />
      <Tick x={1706} y={611} />
      <Tick x={1301} y={671.5} />
      {/* axis bubbles */}
      <Bubble x={1102} y={310.5} label="B" />
      <Bubble x={1102} y={551} label="A" />
      <Bubble x={1301} y={266} label="1" />
      <Bubble x={1505} y={266} label="2" />
      <Bubble x={1706} y={266} label="3" />
      <Bubble x={1301} y={750} label="1" />
      <Bubble x={1505} y={750} label="2" />
      <Bubble x={1706} y={750} label="3" />
      <Bubble x={1907} y={750} label="4" />
      {/* dimensions */}
      <text x="1403" y="651" fontSize="26" fill="#eee" textAnchor="middle" fontFamily={font}>5100</text>
      <text x="1606" y="651" fontSize="26" fill="#eee" textAnchor="middle" fontFamily={font}>5000</text>
      <text x="1806" y="651" fontSize="26" fill="#eee" textAnchor="middle" fontFamily={font}>5000</text>
      <text x="0" y="0" fontSize="26" fill="#eee" textAnchor="middle" fontFamily={font} transform="translate(1220 431) rotate(-90)">6000</text>
      {/* ucs */}
      <path d="M697.5 898V872h-3.5l7.5-17 7.5 17h-3.5v26z" fill="#00e000" />
      <path d="M708 894h17v-5l20 9.5-20 9.5v-5h-17z" fill="#f00000" />
      <ellipse cx="701.5" cy="899" rx="8" ry="8" fill="#0a0ac8" />
      <text x="701.5" y="852" fontSize="22" fill="#00c800" textAnchor="middle" fontFamily={font}>Y</text>
      <text x="756" y="906" fontSize="22" fill="#e80000" textAnchor="middle" fontFamily={font}>X</text>
    </DrawingSvg>
  );
};

const BigTableIcon = () => (
  <svg width="52" height="50" viewBox="0 0 52 50" fill="none" stroke="#c6c6c6" strokeWidth="3.2">
    <path d="M3 3h8a6 6 0 0 1 0 13H3zM21 3h24v30M33 3v24M21 3v13M3 47V26h24M3 37h16M14 26v21M3 47h18" />
    <circle cx="38" cy="39" r="7" />
    <path d="M43 44l5 5" />
  </svg>
);

const BigFootIcon = () => (
  <svg width="52" height="50" viewBox="0 0 52 50" fill="none" stroke="#c6c6c6" strokeWidth="3.2">
    <path d="M15 22V10l10-8h10v22l-6 5M25 2v10H15M35 14h14v10M3 46V36l12-12M3 46h20M3 37h18" />
    <rect x="17" y="12" width="12" height="16" fill="#e2e2e2" stroke="none" />
    <circle cx="38" cy="38" r="7" />
    <path d="M43 43l5 5" />
  </svg>
);

const SmartIcon = () => (
  <svg width="50" height="50" viewBox="0 0 52 52" fill="none" stroke="#535b66" strokeWidth="3.2">
    <path d="M9 7h38M9 22h38M9 37h22M20 0v44M35 0v30" />
    <circle cx="5" cy="7" r="4" fill="#fff" />
    <circle cx="5" cy="22" r="4" fill="#fff" />
    <circle cx="5" cy="37" r="4" fill="#fff" />
    <path d="M29 34v-5h6M40 29h6v5M46 40v6h-6M35 46h-6v-6" stroke="#1e88f0" />
    <circle cx="37.5" cy="37.5" r="1.8" fill="#1e88f0" stroke="#1e88f0" />
  </svg>
);

const Logo = ({ size = 46 }: { size?: number }) => (
  <svg width={size} height={size} viewBox="0 0 46 46">
    <defs>
      <linearGradient id="logoGrad" x1="0" y1="0" x2="0.3" y2="1">
        <stop offset="0" stopColor="#25d0f8" />
        <stop offset="1" stopColor="#0f86f6" />
      </linearGradient>
    </defs>
    <path d="M5 1h35a4.5 4.5 0 0 1 1 9c-6 .5-11 1-11 7 0 8 2 16 1 23-.5 6-8 7-10 1-2-8-1-16-1-23 0-6-8-6-15-7a5 5 0 0 1 0-10z" fill="url(#logoGrad)" />
  </svg>
);

const CadTile = () => (
  <svg width="36" height="36" viewBox="0 0 36 36">
    <rect x="0.5" y="0.5" width="35" height="35" rx="3" fill="#0e4f98" stroke="#8a8f96" strokeWidth="2" />
    <text x="18" y="25" fontSize="15" fontWeight="700" fill="#e8f0fa" textAnchor="middle" fontFamily="Liberation Sans, sans-serif">CAD</text>
  </svg>
);

const CalcIcon = () => (
  <svg width="28" height="36" viewBox="0 0 28 36">
    <rect width="28" height="36" rx="2" fill="#77818a" />
    <rect x="3" y="3" width="22" height="6" fill="#33bde8" />
    {[0, 1, 2].flatMap((r) =>
      [0, 1, 2].map((c) => (
        <rect key={`${r}-${c}`} x={3 + c * 8} y={12 + r * 8} width="6" height="6" fill={c === 2 && r > 0 ? '#17508f' : '#d8dde2'} />
      )),
    )}
  </svg>
);

const IeIcon = () => (
  <svg width="36" height="38" viewBox="0 0 36 38">
    <circle cx="18" cy="20" r="16" fill="#4fc83a" />
    <circle cx="18" cy="20" r="10" fill="#fff" />
    <path d="M8 17h20v5H8z" fill="#3ab82a" />
    <path d="M22 26h10v4H22zM24 12h6v5h-6z" fill="#4fc83a" />
    <path d="M2 34C8 14 22 4 33 1c2 3 0 6-2 9" fill="none" stroke="#d8f0b8" strokeWidth="1.5" />
  </svg>
);

const WpsIcon = () => (
  <svg width="36" height="34" viewBox="0 0 36 34">
    <path d="M1 2h8l5 18 4-12h5l-7 24h-6zM34 2h-7l-4 14 3 10z" fill="#ee2c20" />
    <path d="M14 2h8l-3 8h-3z" fill="#ffb0a0" />
  </svg>
);

const FolderIcon = () => (
  <svg width="33" height="32" viewBox="0 0 33 32">
    <path d="M0 3a2 2 0 0 1 2-2h10l3 4h-15z" fill="#e8a820" />
    <rect y="5" width="33" height="27" rx="2" fill="#fbd35a" />
    <path d="M8 22h17v10H21v-5h-9v5H8z" fill="#2d8ee0" />
  </svg>
);

const WinLogo = () => (
  <svg width="24" height="24" viewBox="0 0 24 24" fill="#fff">
    <path d="M0 3.5L10.5 2v9.5H0zM11.5 1.8L24 0v11.5H11.5zM0 12.5h10.5V22L0 20.5zM11.5 12.5H24V24L11.5 22.2z" />
  </svg>
);

const LensIcon = () => (
  <svg width="24" height="26" viewBox="0 0 24 26" fill="none" stroke="#fff" strokeWidth="1.5">
    <circle cx="14" cy="10" r="8" />
    <path d="M8.5 16L1 24" />
  </svg>
);

const TrayIcon = ({ children }: { children: React.ReactNode }) => (
  <svg width="24" height="24" viewBox="0 0 24 24" fill="none" stroke="#fff" strokeWidth="1.4">
    {children}
  </svg>
);

const App = () => (
  <>
    <GlobalStyle />
    <Page>
      <Header>
        <LogoCol>
          <Logo />
          <LogoCorner />
        </LogoCol>
        <HeaderMain>
          <TitleRow>
            <QuickItem><Icon name="upload" /></QuickItem>
            <QuickItem><Icon name="newfile" /></QuickItem>
            <QuickItem><Icon name="folder" /></QuickItem>
            <QuickItem><Icon name="save" /></QuickItem>
            <QuickItem $w={55}><Icon name="undo" /><Caret $ml={6} $color="#555" /></QuickItem>
            <QuickItem $w={50}><Icon name="redo" /><Caret $ml={4} $color="#ccc" /></QuickItem>
            <QuickItem><Icon name="sigma" /></QuickItem>
            <QuickItem><Icon name="sheetFind" /></QuickItem>
            <QuickItem><Icon name="gridFind" /></QuickItem>
            <QuickItem><Icon name="gridFind2" /></QuickItem>
            <QuickItem><Icon name="pen" /></QuickItem>
            <QuickItem><Icon name="sections" /></QuickItem>
            <QuickItem><Icon name="pagePlus" /></QuickItem>
            <TitleText><TitleMark>=</TitleMark>广联达BIM土建计量平台 GTJ2021 - [C:\Users\欢\Desktop\盘锦格林凯默科技有限公司\格列齐特五车间\格列齐特五车间.GTJ]</TitleText>
            <WinButton><Icon name="minimize" size={16} /></WinButton>
            <WinButton><Icon name="restoreWin" size={16} /></WinButton>
            <WinButton><Icon name="close" size={15} /></WinButton>
          </TitleRow>
          <TabRow>
            <Tab>开始</Tab>
            <Tab>工程设置</Tab>
            <Tab $active>建模</Tab>
            <Tab>工程量</Tab>
            <Tab>视图</Tab>
            <Tab>工具</Tab>
            <Tab>云应用</Tab>
            <Tab>协同建模(限免)</Tab>
            <SearchBox>
              <SearchText>楼层三维显示图元/轴网有错位，位置不对应如何处理？</SearchText>
              <Icon name="search" size={16} />
            </SearchBox>
            <Avatar>
              <svg width="24" height="24" viewBox="0 0 24 24">
                <circle cx="12" cy="9" r="6" fill="#fff" />
                <path d="M2 24c1-7 5-9 10-9s9 2 10 9z" fill="#fff" />
              </svg>
            </Avatar>
            <UserName>汤圆是只小兔叽</UserName>
            <HeadIcon $ml={25}><Icon name="chat" size={24} /></HeadIcon>
            <HeadIcon $ml={11}><Question>?</Question><Caret $ml={3} $color="#666" /></HeadIcon>
            <HeadIcon $ml={12}><Icon name="shirt" size={23} /></HeadIcon>
            <HeadIcon $ml={11}><Icon name="chevron" size={22} /></HeadIcon>
          </TabRow>
        </HeaderMain>
        <Tip>搜一搜，完成每日积分任务~</Tip>
      </Header>

      <Ribbon>
        <Group $w={349}>
          <GroupBody $pad={24}>
            <BigItem $w={37}>
              <PointerIcon width="36" height="44" viewBox="0 0 36 44">
                <path d="M5 2l27 27-17 1-10 12z" fill={L} stroke={B} strokeWidth="2.4" strokeLinejoin="round" />
              </PointerIcon>
              <BigLabel>选择</BigLabel>
            </BigItem>
            <Col $w={147} $ml={19}>
              <RItem icon="pick" label="拾取构件" />
              <RItem icon="batch" label="批量选择" />
              <RItem icon="attrSel" label="按属性选择" caret />
            </Col>
            <Col>
              <RItem icon="findEl" label="查找图元" />
              <RItem icon="filter" label="过滤图元" off />
            </Col>
          </GroupBody>
          <GroupLabel $pl={8}>选择</GroupLabel>
        </Group>
        <Group $w={291}>
          <GroupBody $pad={12}>
            <Col $w={120}>
              <RItem icon="scale" label="设置比例" off />
              <RItem icon="replace" label="查找替换" off />
              <RItem icon="restore" label="还原CAD" off />
            </Col>
            <Col>
              <RItem icon="floorTable" label="识别楼层表" off />
              <RItem icon="cadOpt" label="CAD识别选项" />
            </Col>
          </GroupBody>
          <GroupLabel $up>图纸操作<Caret /></GroupLabel>
        </Group>
        <Group $w={414}>
          <GroupBody $pad={12}>
            <Col $w={101}>
              <RItem icon="define" label="定义" />
              <RItem icon="cloud" label="云检查" />
              <RItem icon="lock" label="锁定" caret />
            </Col>
            <Col $w={167}>
              <RItem icon="copyTo" label="复制到其它层" caret />
              <RItem icon="autoAlign" label="自动平齐顶板" caret off />
              <RItem icon="storeEl" label="图元存盘" caret />
            </Col>
            <Col>
              <RItem icon="twoPoint" label="两点辅轴" caret />
              <RItem icon="dim" label="长度标注" caret />
              <RItem icon="convert" label="转换图元" />
            </Col>
          </GroupBody>
          <GroupLabel $up>通用操作<Caret /></GroupLabel>
        </Group>
        <Group $w={169}>
          <GroupBody $pad={12}>
            <IconGrid $cols="34px 35px 49px 24px">
              <Icon name="trash" />
              <Icon name="rotate" />
              <Icon name="breakLine" />
              <Icon name="offset" />
              <Icon name="copyEl" />
              <Icon name="mirror" />
              <IconCell><Icon name="align" /><Caret $ml={5} /></IconCell>
              <Icon name="splitBoxes" />
              <Icon name="move" />
              <Icon name="stretch" />
              <Icon name="splitOff" />
              <Icon name="editBox" />
            </IconGrid>
          </GroupBody>
          <GroupLabel $up>修改<Caret /></GroupLabel>
        </Group>
        <Group $w={101}>
          <GroupBody $pad={9}>
            <IconGrid $cols="50px 30px">
              <IconCell $pl={3}><Icon name="point" /></IconCell>
              <Icon name="dial" />
              <IconCell $active><Icon name="line" /></IconCell>
              <Icon name="rect" />
              <IconCell $pl={3}><Icon name="arc" /><Caret $ml={5} /></IconCell>
            </IconGrid>
          </GroupBody>
          <GroupLabel $pl={6}>绘图</GroupLabel>
        </Group>
        <Group $w={280}>
          <GroupBody $pad={15}>
            <BigItem $w={90} $off><BigTableIcon /><BigLabel>识别独基表</BigLabel></BigItem>
            <BigItem $w={108} $off $ml={16}><BigFootIcon /><BigLabel>识别独立基础</BigLabel></BigItem>
            <SmallAside><Icon name="check" /></SmallAside>
          </GroupBody>
          <GroupLabel $pl={4}>识别独立基础</GroupLabel>
        </Group>
        <Group $w={117}>
          <GroupBody $pad={0}>
            <BigItem $w={96}>
              <SmartIcon />
              <BigLabel>智能布置</BigLabel>
              <BigCaret><Caret $ml={0} /></BigCaret>
            </BigItem>
          </GroupBody>
          <GroupLabel $pl={4}>智能布置</GroupLabel>
        </Group>
        <Group $w={188} $end>
          <GroupBody $pad={14}>
            <Col>
              <Item><Icon name="rotate3" /></Item>
              <Item><Icon name="basket" /></Item>
              <Item><Icon name="fold" /><Caret $ml={5} /></Item>
            </Col>
          </GroupBody>
          <GroupLabel $pl={6}>独立基础二次编辑</GroupLabel>
        </Group>
      </Ribbon>

      <OptionRow>
        <Combo $w={147}>基础层<Caret $ml={0} /></Combo>
        <Combo $w={147}>基础<Caret $ml={0} /></Combo>
        <Combo $w={147}>独立基础<Caret $ml={0} /></Combo>
        <Combo $w={147}>DJ-1<Caret $ml={0} /></Combo>
        <Combo $w={85}>不偏移<Caret $ml={0} /></Combo>
        <OptLabel $w={26}>X=</OptLabel>
        <NumInput $w={91}>0<Spin><Caret $ml={0} /><Caret $ml={0} /></Spin></NumInput>
        <OptLabel $w={59} $ml={-4}>mm Y=</OptLabel>
        <NumInput $w={90}>0<Spin><Caret $ml={0} /><Caret $ml={0} /></Spin></NumInput>
        <OptLabel $w={30} $ml={-4}>mm</OptLabel>
      </OptionRow>

      <Workspace>
        <NavPanel>
          <Strip><Icon name="panelClose" size={11} /></Strip>
          <NavTitle>导航栏</NavTitle>
          <NavIcons>
            <Icon name="sparkle" />
            <NavToggle $active $ml={12}><Icon name="listView" /></NavToggle>
            <NavToggle $active $ml={6}><Icon name="detailView" /></NavToggle>
          </NavIcons>
          <NavSection>基础</NavSection>
          <NavList>
            {navItems.map(([icon, label]) => (
              <NavItem key={label} $active={icon === 'footing'}>
                <Icon name={icon} size={28} />
                <span>{label}</span>
              </NavItem>
            ))}
          </NavList>
          <Scrollbar $l={177} $t={432} $w={12} $h={220} />
        </NavPanel>

        <MidColumn>
          <Panel $h={283}>
            <Strip><Icon name="panelClose" size={11} /></Strip>
            <TabStrip>
              <PanelTab $active>构件列表</PanelTab>
              <PanelTab>图纸管理</PanelTab>
            </TabStrip>
            <CompTools>
              <NewButton>
                <Icon name="newfile" />
                <span>新建</span>
                <Caret $ml={6} $color="#999" />
              </NewButton>
              <CompTool $ml={10}><Icon name="compCopy" />复制</CompTool>
              <CompTool $ml={19} $gap={4}><Icon name="trash" />删除</CompTool>
              <CompTool $ml={18}><Icon name="layerCopy" />层间复制</CompTool>
              <MoreButton>
                <svg width="10" height="8" viewBox="0 0 10 8" fill="#666">
                  <path d="M0 0l4 4-4 4zM5 0l4 4-4 4z" />
                </svg>
              </MoreButton>
            </CompTools>
            <SearchRow><Icon name="search" size={17} /></SearchRow>
            <TreeNode>
              <TreeCaret />
              <span>DJ-1  &lt;0&gt;</span>
            </TreeNode>
            <LeafChip>(底)  DJ-1-1</LeafChip>
            <Menu>
              <MenuItem>新建独立基础</MenuItem>
              <MenuItem>新建自定义独立基础</MenuItem>
            </Menu>
          </Panel>
          <Panel $h={432}>
            <Strip><Icon name="panelClose" size={11} /></Strip>
            <TabStrip>
              <PanelTab $active>属性列表</PanelTab>
              <PanelTab>图层管理</PanelTab>
            </TabStrip>
            <Table>
              <colgroup>
                <col width="33" />
                <col width="152" />
                <col width="149" />
                <col width="61" />
              </colgroup>
              <thead>
                <tr>
                  <HeadCell />
                  <HeadCell>属性名称</HeadCell>
                  <HeadCell>属性值</HeadCell>
                  <HeadCell>附加</HeadCell>
                </tr>
              </thead>
              <tbody>
                {propRows.map((r, i) => (
                  <Row key={r.name}>
                    <IndexCell>{i + 1}</IndexCell>
                    <Cell $link={r.link}>{r.name}</Cell>
                    <Cell>
                      {r.rebar && (
                        <Rebar width="14" height="14" viewBox="0 0 14 14">
                          <circle cx="7" cy="6" r="4" />
                          <path d="M7 0v12M2 13h10" />
                        </Rebar>
                      )}
                      {r.value}
                    </Cell>
                    <Cell $center>{r.check && <Check />}</Cell>
                  </Row>
                ))}
                <Row>
                  <IndexCell>11</IndexCell>
                  <Cell><Expander>-</Expander>钢筋业务属性</Cell>
                  <Cell />
                  <Cell />
                </Row>
              </tbody>
            </Table>
            <Scrollbar $l={402} $t={73} $w={12} $h={218} />
          </Panel>
        </MidColumn>

        <Splitter><SplitBar /></Splitter>

        <Canvas>
          <Drawing />
          <CommandBar>
            <Icon name="cmdIcon" />
            <span>指定第一点</span>
          </CommandBar>
          <Watermark>
            <WatermarkHead>激活 Windows</WatermarkHead>
            <WatermarkSub>转到“设置”以激活 Windows。</WatermarkSub>
          </Watermark>
          <ScrollTab><ScrollFill /></ScrollTab>
          <Dock>
            <DockSlot $h={44}><Icon name="orbit" size={30} /></DockSlot>
            <DockSlot $h={44}><Icon name="cube3d" size={30} /></DockSlot>
            <DockSlot $h={42}><Icon name="cubeTop" size={30} /></DockSlot>
            <DockSlot $h={20}><Caret $ml={0} $color="#555" /></DockSlot>
            <DockSlot $h={34}><Icon name="cubeSel" size={30} /></DockSlot>
            <DockSlot $h={26}><Caret $ml={0} $color="#555" /></DockSlot>
            <DockSlot $h={34}><Icon name="corners" size={30} /></DockSlot>
            <DockSlot $h={52}><Icon name="cubeBox" size={30} /></DockSlot>
            <DockRule />
            <DockSlot $h={50}><Icon name="props" size={32} /></DockSlot>
          </Dock>
        </Canvas>
      </Workspace>

      <StatusBar>
        <StatText $w={125}>层高：  3</StatText>
        <StatText $w={198}>标高：  -3.05~-0.05</StatText>
        <StatText $w={156}>选中图元：0</StatText>
        <StatText $w={155}>隐藏图元：0</StatText>
        <StatButton $w={36} $ml={0}><Icon name="stOrtho" size={26} /></StatButton>
        <StatButton $w={54} $ml={5} $active><Icon name="stBox" size={26} /><Caret $ml={0} $color="#555" /></StatButton>
        <StatButton $w={38} $ml={9}><Icon name="stCross" size={26} /></StatButton>
        <StatButton $w={54} $ml={8}><Icon name="stAngle" size={26} /><Caret $ml={0} $color="#555" /></StatButton>
        <StatButton $w={53} $ml={5}><Icon name="stPlus" size={26} /><Caret $ml={0} $color="#555" /></StatButton>
        <StatButton $w={37} $ml={6}><Icon name="stDoc" size={26} /></StatButton>
        <StatButton $w={37} $ml={5}><Icon name="stArc" size={26} /></StatButton>
      </StatusBar>

      <Taskbar>
        <TaskSlot $w={72}><WinLogo /></TaskSlot>
        <TaskSlot><LensIcon /></TaskSlot>
        <TaskSlot><CadTile /></TaskSlot>
        <TaskSlot><CalcIcon /></TaskSlot>
        <TaskSlot $running><IeIcon /></TaskSlot>
        <TaskSlot $running><CadTile /></TaskSlot>
        <TaskSlot $running><WpsIcon /></TaskSlot>
        <TaskSlot $running><FolderIcon /></TaskSlot>
        <TaskSlot $active>
          <svg width="36" height="36" viewBox="0 0 36 36">
            <rect width="36" height="36" rx="5" fill="#d4ecfb" />
            <g transform="translate(5 5) scale(0.57)">
              <path d="M5 1h35a4.5 4.5 0 0 1 1 9c-6 .5-11 1-11 7 0 8 2 16 1 23-.5 6-8 7-10 1-2-8-1-16-1-23 0-6-8-6-15-7a5 5 0 0 1 0-10z" fill="#1c9af5" />
            </g>
          </svg>
        </TaskSlot>
        <Tray>
          <TraySlot $w={40}>
            <TrayIcon><path d="M5 16l7-8 7 8" /></TrayIcon>
          </TraySlot>
          <TraySlot $w={34} $ml={34}>
            <TrayIcon>
              <rect x="4" y="8" width="17" height="11" />
              <rect x="8" y="10" width="12" height="7" fill="#fff" />
              <path d="M3 4v5M6 4v5" />
            </TrayIcon>
          </TraySlot>
          <TraySlot $w={40}>
            <TrayIcon><path d="M4 20a16 16 0 0 1 15-16M8 20a12 12 0 0 1 11-11M12 20a7 7 0 0 1 6-6" /></TrayIcon>
          </TraySlot>
          <TraySlot $w={30}>
            <TrayIcon><path d="M3 9h4l5-5v16l-5-5H3zM16 9l5 6M21 9l-5 6" /></TrayIcon>
          </TraySlot>
          <TraySlot $w={40}><ImeGlyph>中</ImeGlyph></TraySlot>
          <TraySlot $w={48}>
            <svg width="24" height="28" viewBox="0 0 24 28">
              <path d="M3 3l19-3-1 25-18 3z" fill="#ec5a1f" />
              <text x="12" y="21" fontSize="20" fontWeight="700" fill="#fff" textAnchor="middle" fontFamily="Liberation Sans, sans-serif">S</text>
            </svg>
          </TraySlot>
          <Clock>
            <div>16:56 周五</div>
            <div>2022/9/9</div>
          </Clock>
          <ActionCenter>
            <svg width="24" height="24" viewBox="0 0 24 24">
              <path d="M2 0h20v17H8l-6 4z" fill="#fff" />
              <path d="M6 5h12M6 9h12M6 13h8" stroke="#333" strokeWidth="1.5" />
            </svg>
            <Badge>3</Badge>
          </ActionCenter>
        </Tray>
      </Taskbar>
    </Page>
  </>
);

export default App;
